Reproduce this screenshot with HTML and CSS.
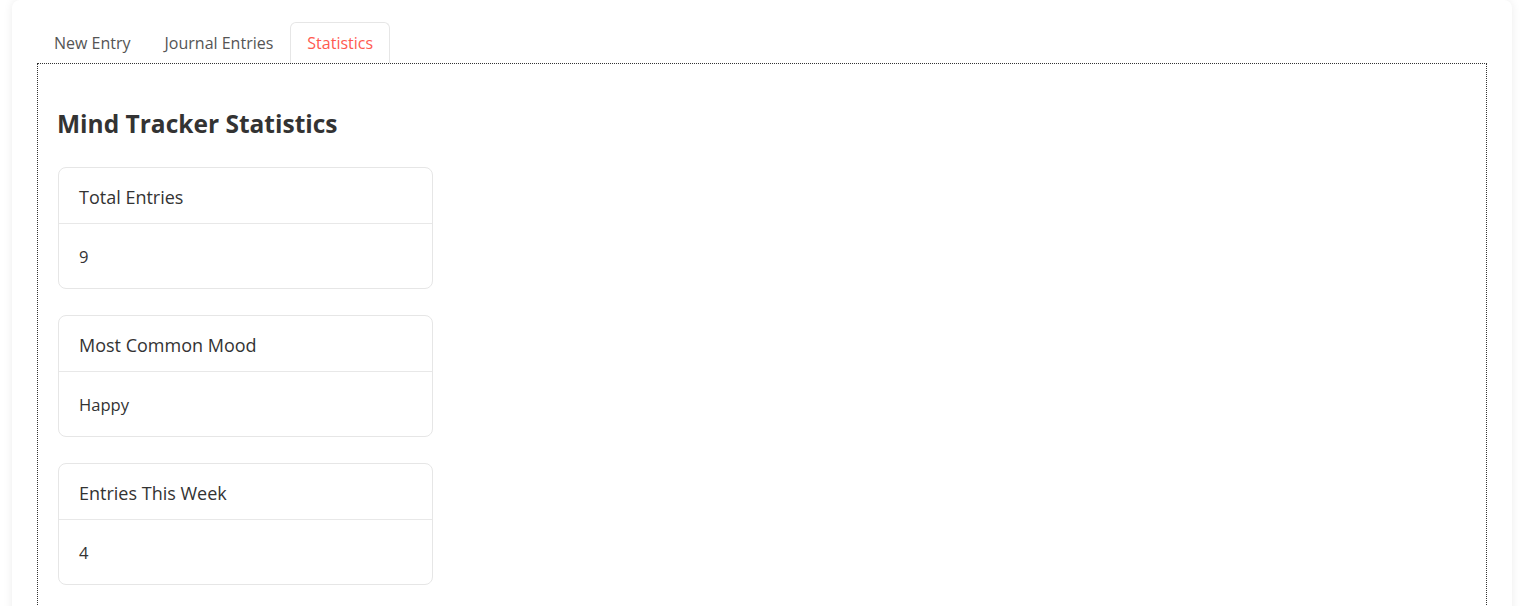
FILE: index.html
```html
<!DOCTYPE html>
<html lang="en">
<head>
  <meta charset="UTF-8">
  <meta name="viewport" content="width=device-width, initial-scale=1.0">
  <title>Mind Tracker</title>
  <link rel="stylesheet" href="styles.css">
</head>
<body>
  <div class="app">
    <ul class="tabs">
      <li><a class="tab-link" href="#">New Entry</a></li>
      <li><a class="tab-link" href="#">Journal Entries</a></li>
      <li><a class="tab-link active" href="#">Statistics</a></li>
    </ul>

    <div class="tab-pane">
      <h2 class="stats-title">Mind Tracker Statistics</h2>

      <div class="stat-card">
        <div class="stat-header">Total Entries</div>
        <div class="stat-body">9</div>
      </div>

      <div class="stat-card">
        <div class="stat-header">Most Common Mood</div>
        <div class="stat-body">Happy</div>
      </div>

      <div class="stat-card">
        <div class="stat-header">Entries This Week</div>
        <div class="stat-body">4</div>
      </div>
    </div>
  </div>
</body>
</html>
```

FILE: styles.css
```css
body {
  font-family: 'Open Sans', 'Noto Sans', sans-serif;
  margin: 0;
  background: #fff;
  color: #333;
}

.app {
  width: 1500px;
  margin-left: 12px;
  background: #fff;
  border-radius: 8px;
  box-shadow: 0 0 10px rgba(0, 0, 0, 0.08);
  padding: 22px 25px 40px;
  box-sizing: border-box;
  min-height: 700px;
}

.tabs {
  display: flex;
  list-style: none;
  margin: 0;
  padding: 0;
}

.tab-link {
  display: block;
  padding: 8px 16px;
  font-size: 16px;
  line-height: 24px;
  color: #555;
  text-decoration: none;
  border: 1px solid transparent;
  border-bottom: none;
  border-radius: 6px 6px 0 0;
}

.tab-link.active {
  color: #ff5a4f;
  border-color: #e6e6e6;
  background: #fff;
}

.tab-pane {
  border: 1px dotted #333;
  padding: 20px;
  min-height: 600px;
}

.stats-title {
  font-size: 24.5px;
  font-weight: 700;
  line-height: 34px;
  margin: 23px 0 26px -1px;
  color: #333;
}

.stat-card {
  width: 375px;
  box-sizing: border-box;
  border: 1px solid #e6e6e6;
  border-radius: 8px;
  margin-bottom: 26px;
}

.stat-header {
  padding: 16px 20px 12px;
  font-size: 18px;
  line-height: 27px;
  border-bottom: 1px solid #e8e8e8;
}

.stat-body {
  padding: 21px 20px 19px;
  font-size: 16.6px;
  line-height: 24px;
}
```
